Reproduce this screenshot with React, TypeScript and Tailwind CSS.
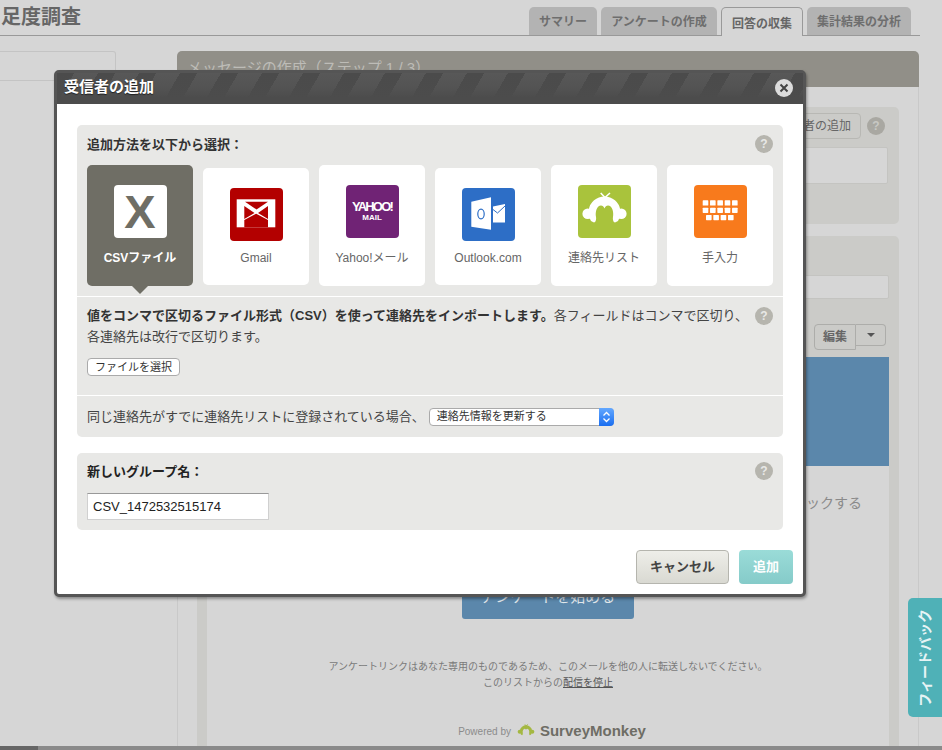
import type { ReactNode } from "react";

function Help({ className = "" }: { className?: string }) {
  return (
    <div className={`flex h-[18px] w-[18px] shrink-0 items-center justify-center rounded-full bg-[#b6b5ae] text-[12px] font-bold text-[#e8e8e6] ${className}`}>
      ?
    </div>
  );
}

function Monkey({ className = "" }: { className?: string }) {
  return (
    <svg viewBox="0 0 53 53" className={className} fill="currentColor">
      <circle cx="9.700" cy="28.700" r="5.300" />
      <circle cx="43.300" cy="28.700" r="5.300" />
      <path d="M13 36l3 1.500c1.500 0 2.500-3 2-5.500-1-5.500 1-11.500 5-11.500 1.500 0 2.800 1.200 3.500 3 .7-1.800 2-3 3.500-3 4 0 6 6 5 11.500-.5 2.500.5 5.500 2 5.500l3-1.500A16 16 0 1 0 13 36z" />
      <path d="M27 12.500 22.700 8M27 12.500 32 8" stroke="currentColor" strokeWidth="1.600" fill="none" />
    </svg>
  );
}

function GmailIcon() {
  return (
    <svg viewBox="0 0 53 53" className="h-full w-full">
      <rect x="6.700" y="11.300" width="38.600" height="28" fill="#fff" />
      <path d="M15 13.700h23l-11.500 7.800z" fill="#b30000" />
      <path d="M14.300 18 24.500 25 14.300 31zM38 18 28 25 38 31z" fill="#b30000" />
      <path d="M14.300 39.300V32l11.900-6.300L38 32v7.300z" fill="#b30000" />
    </svg>
  );
}

function OutlookIcon() {
  return (
    <svg viewBox="0 0 53 53" className="h-full w-full">
      <path d="M9.300 13.700 29 9.300v32.400l-19.700-3z" fill="#fff" />
      <ellipse cx="19" cy="26" rx="3.200" ry="4.800" fill="none" stroke="#2d6ec6" strokeWidth="1.200" />
      <path d="M31 18.500 43 16v18.500H31z" fill="#fff" />
      <path d="m31 21.500 4.500 3.500 7.500-7" fill="none" stroke="#2d6ec6" strokeWidth="1" />
    </svg>
  );
}

function KeyboardIcon() {
  const rows = [
    { y: 15.3, x: 8.7, n: 5 },
    { y: 22.7, x: 8.7, n: 5 },
    { y: 30, x: 12, n: 4 },
  ];
  return (
    <svg viewBox="0 0 53 53" className="h-full w-full">
      {rows.map((r) =>
        Array.from({ length: r.n }).map((_, i) => (
          <rect key={`${r.y}-${i}`} x={r.x + i * 7.33} y={r.y} width="5.600" height="5.200" rx="0.600" fill="#fff" />
        ))
      )}
    </svg>
  );
}

function Method({ label, icon, active, low }: { label: string; icon: ReactNode; active?: boolean; low?: boolean }) {
  return (
    <div
      className={`relative flex w-[106px] flex-col items-center rounded-[5px] pt-5 ${low ? "mt-[3px] h-[117px]" : "h-[121px]"} ${active ? "bg-[#6f6e65]" : "bg-white"}`}
    >
      {icon}
      <div className={`${low ? "mt-[9px]" : "mt-3"} text-[12px] leading-4 ${active ? "font-bold text-white" : "text-[#666]"}`}>{label}</div>
      {active && (
        <div className="absolute left-1/2 top-full h-0 w-0 -translate-x-1/2 border-x-[8px] border-t-[8px] border-x-transparent border-t-[#6f6e65]" />
      )}
    </div>
  );
}

function Dialog() {
  return (
    <div className="absolute left-[54px] top-[70px] h-[527px] w-[752px] rounded-[5px] border-[3px] border-[#555] bg-white shadow-[1px_2px_3px_rgba(0,0,0,0.35)]">
      <div className="flex h-[31px] items-center justify-between border-b-2 border-[#4c4c4c] bg-[image:linear-gradient(to_bottom,rgba(76,76,76,0)_0%,rgba(76,76,76,0.4)_50%,rgba(76,76,76,1)_85%),repeating-linear-gradient(120deg,#4b4b4b_0px,#4b4b4b_15px,#585858_15px,#585858_35.500px)] pl-[7px] pr-[10px]">
        <div className="text-[15px] font-bold text-white [text-shadow:0_1px_1px_rgba(0,0,0,0.6)]">受信者の追加</div>
        <div className="flex h-[18px] w-[18px] items-center justify-center rounded-full bg-[#dcdcdc]">
          <svg viewBox="0 0 18 18" className="h-[18px] w-[18px]">
            <path d="M5.500 5.500l7 7M12.500 5.500l-7 7" stroke="#444" strokeWidth="2" />
          </svg>
        </div>
      </div>

      <div className="px-5 pt-[21px]">
        <div className="h-[312px] rounded-[5px] bg-[#e8e8e6]">
          <div className="mb-[2px] flex h-[38px] items-center justify-between px-[10px]">
            <div className="pt-px text-[13px] font-bold text-[#333]">追加方法を以下から選択：</div>
            <Help />
          </div>
          <div className="flex h-[131px] items-start gap-[10px] px-[10px]">
            <Method
              active
              label="CSVファイル"
              icon={
                <div className="flex h-[53px] w-[53px] items-center justify-center rounded-[4px] bg-white text-[47px] font-bold leading-none text-[#6f6e65]">
                  X
                </div>
              }
            />
            <Method
              low
              label="Gmail"
              icon={
                <div className="h-[53px] w-[53px] rounded-[4px] bg-[#b30000]">
                  <GmailIcon />
                </div>
              }
            />
            <Method
              label="Yahoo!メール"
              icon={
                <div className="flex h-[53px] w-[53px] flex-col items-center justify-center rounded-[4px] bg-[#702375] font-bold text-white">
                  <div className="text-[13px] leading-[12px] tracking-[-1.800px]">YAHOO!</div>
                  <div className="text-[8px] leading-[10px]">MAIL</div>
                </div>
              }
            />
            <Method
              low
              label="Outlook.com"
              icon={
                <div className="h-[53px] w-[53px] rounded-[4px] bg-[#2d6ec6]">
                  <OutlookIcon />
                </div>
              }
            />
            <Method
              label="連絡先リスト"
              icon={
                <div className="h-[53px] w-[53px] rounded-[4px] bg-[#a9c33c] text-white">
                  <Monkey className="h-full w-full" />
                </div>
              }
            />
            <Method
              label="手入力"
              icon={
                <div className="h-[53px] w-[53px] rounded-[4px] bg-[#f87a1c]">
                  <KeyboardIcon />
                </div>
              }
            />
          </div>
          <div className="h-[99px] border-t border-white px-[10px] pt-2">
            <div className="flex items-start justify-between">
              <p className="text-[13px] leading-[21px] text-[#444]">
                <span className="font-bold text-[#333]">値をコンマで区切るファイル形式（CSV）を使って連絡先をインポートします。</span>
                各フィールドはコンマで区切り、
                <br />
                各連絡先は改行で区切ります。
              </p>
              <Help className="mt-[2px]" />
            </div>
            <button className="mt-[11px] flex h-[18px] w-[93px] items-center justify-center rounded-[4px] border border-[#aaa] bg-white text-[11px] text-[#333]">
              ファイルを選択
            </button>
          </div>
          <div className="flex h-[42px] items-center gap-1 border-t border-white px-[10px]">
            <div className="text-[13px] text-[#444]">同じ連絡先がすでに連絡先リストに登録されている場合、</div>
            <div className="flex h-[18px] w-[185px] items-center justify-between rounded-[4px] border border-[#aaa] bg-white pl-[7px] text-[11px] text-[#333]">
              連絡先情報を更新する
              <div className="-mr-px flex h-[18px] w-[15px] items-center justify-center rounded-r-[4px] bg-[linear-gradient(to_bottom,#63a8ff,#1a6ef0)]">
                <svg viewBox="0 0 15 18" className="h-[18px] w-[15px]">
                  <path d="m4.500 7.500 3-3 3 3M4.500 10.500l3 3 3-3" fill="none" stroke="#fff" strokeWidth="1.300" />
                </svg>
              </div>
            </div>
          </div>
        </div>

        <div className="mt-4 h-[77px] rounded-[5px] bg-[#e8e8e6]">
          <div className="flex h-9 items-center justify-between px-[10px]">
            <div className="pt-px text-[13px] font-bold text-[#222]">新しいグループ名：</div>
            <Help />
          </div>
          <input
            readOnly
            value="CSV_1472532515174"
            className="ml-[10px] mt-1 h-[27px] w-[182px] border border-[#d0d0d0] border-t-[#999] bg-white px-[5px] text-[13px] text-[#222]"
          />
        </div>
      </div>

      <div className="mt-5 flex justify-end gap-[10px] pr-[10px]">
        <button className="h-[34px] w-[93px] rounded-[4px] border border-[#b5b5ae] bg-[linear-gradient(to_bottom,#eeeee9,#d9d9d2)] text-[13px] font-bold text-[#444]">
          キャンセル
        </button>
        <button className="h-[34px] w-[54px] rounded-[4px] bg-[linear-gradient(to_bottom,#9adcd8,#85cbc9)] text-[13px] font-bold text-white">
          追加
        </button>
      </div>
    </div>
  );
}

function Background() {
  return (
    <div className="flex h-[746px] flex-col overflow-hidden">
      <header className="flex h-9 w-[920px] items-end justify-between border-b border-[#999] pr-[9px]">
        <div className="self-start pl-px pt-[3px] text-[20px] font-bold leading-7 text-[#666]">足度調査</div>
        <div className="flex gap-1 text-[12px] font-bold">
          <div className="flex h-7 w-[68px] items-center justify-center rounded-t-[5px] bg-[#b3b3b3] pt-px text-[#6e6e6e]">サマリー</div>
          <div className="flex h-7 w-[116px] items-center justify-center rounded-t-[5px] bg-[#b3b3b3] pt-px text-[#6e6e6e]">アンケートの作成</div>
          <div className="-mb-px flex h-[29px] w-[82px] items-center justify-center rounded-t-[5px] border border-b-0 border-[#999] bg-[#d6d6d6] pt-[3px] text-[#666]">回答の収集</div>
          <div className="flex h-7 w-[104px] items-center justify-center rounded-t-[5px] bg-[#b3b3b3] pt-px text-[#6e6e6e]">集計結果の分析</div>
        </div>
      </header>

      <div className="flex flex-1 pt-[15px]">
        <div className="w-[177px] shrink-0">
          <div className="h-[30px] w-[116px] rounded-tr-[3px] border border-l-0 border-[#c4c4c4]" />
        </div>
        <div className="flex w-[742px] flex-col">
          <div className="h-9 rounded-t-[5px] bg-[#918f88] pl-[10px] pt-[6px] text-[15px] text-[#bdbcb7]">メッセージの作成（ステップ 1 / 3）</div>
          <div className="flex flex-1 flex-col border-x border-[#c9c9c9] px-[19px] pt-5">
            <div className="h-[117px] rounded-[5px] bg-[#cbcbc8] pr-[11px] pt-[6px]">
              <div className="flex items-center justify-end gap-[6px] pr-[3px]">
                <div className="flex h-[26px] w-[92px] items-center justify-center rounded-[4px] border border-[#b8b8b4] text-[12px] text-[#666]">受信者の追加</div>
                <div className="flex h-[18px] w-[18px] items-center justify-center rounded-full bg-[#a9a8a2] text-[12px] font-bold text-[#c8c8c4]">?</div>
              </div>
              <div className="ml-3 mt-2 h-[37px] rounded-[2px] border border-[#c4c4c1] bg-[#d6d6d6]" />
            </div>

            <div className="mt-3 flex flex-1 flex-col rounded-t-[5px] bg-[#cbcbc8] px-[10px] pt-[39px]">
              <div className="h-6 rounded-[2px] border border-[#c4c4c1] bg-[#d6d6d6]" />
              <div className="mt-[25px] flex h-[33px] items-start justify-end pr-[3px]">
                <div className="flex h-[26px] w-[42px] items-center justify-center rounded-l-[4px] border border-[#adadaa] text-[12px] font-bold text-[#666]">編集</div>
                <div className="flex h-[22px] w-[30px] items-center justify-center rounded-r-[4px] border border-l-0 border-[#adadaa]">
                  <div className="h-0 w-0 border-x-[4px] border-t-[4px] border-x-transparent border-t-[#555]" />
                </div>
              </div>
              <div className="h-[109px] shrink-0 bg-[#5b87ab]" />
              <div className="flex flex-1 flex-col items-center bg-[#d6d6d6]">
                <div className="mt-[27px] h-5 w-full pr-[27px] text-right text-[14px] leading-5 text-[#8a8a8a]">下のボタンをクリックする</div>
                <div className="mt-[62px] flex h-11 w-[172px] items-center justify-center rounded-[3px] bg-[#5b87ab] text-[15px] text-[#e0e6ea]">アンケートを始める</div>
                <div className="mt-10 text-center text-[10px] leading-4 text-[#7a7a7a]">
                  アンケートリンクはあなた専用のものであるため、このメールを他の人に転送しないでください。
                  <br />
                  このリストからの<span className="text-[#555] underline">配信を停止</span>
                </div>
                <div className="ml-2 mt-[30px] flex h-5 items-center">
                  <span className="text-[10px] text-[#8b8b8b]">Powered by</span>
                  <Monkey className="ml-[5px] h-5 w-5 text-[#a4b842]" />
                  <span className="ml-1 text-[15px] font-bold text-[#6e6d65]">SurveyMonkey</span>
                </div>
              </div>
            </div>
          </div>
        </div>
      </div>
    </div>
  );
}

export default function App() {
  return (
    <div className="relative h-[750px] w-[942px] overflow-hidden bg-[#d6d6d6] [font-family:'Liberation_Sans','Noto_Sans_CJK_JP',sans-serif]">
      <Background />
      <div className="flex h-1 bg-[#8a8a8a]">
        <div className="w-[38px] bg-[#666]" />
      </div>
      <Dialog />
      <div className="absolute left-[908px] top-[598px] flex h-[119px] w-[34px] items-center justify-center rounded-l-[5px] bg-[#4fb1b7]">
        <span className="rotate-180 text-[14px] font-bold text-[#e6f4f5] [text-orientation:sideways] [writing-mode:vertical-rl]">フィードバック</span>
      </div>
    </div>
  );
}
